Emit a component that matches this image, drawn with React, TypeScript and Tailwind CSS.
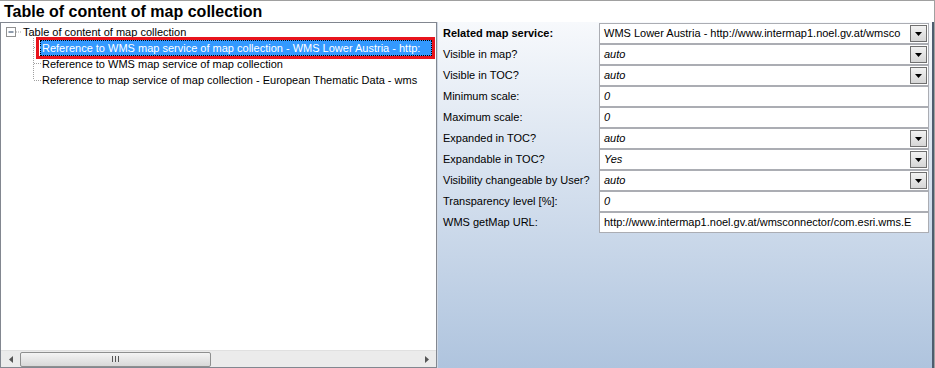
import React from "react";

const rows: { label: string; value: string; combo?: boolean; italic?: boolean; bold?: boolean }[] = [
  { label: "Related map service:", value: "WMS Lower Austria - http://www.intermap1.noel.gv.at/wmsco", combo: true, bold: true },
  { label: "Visible in map?", value: "auto", combo: true, italic: true },
  { label: "Visible in TOC?", value: "auto", combo: true, italic: true },
  { label: "Minimum scale:", value: "0", italic: true },
  { label: "Maximum scale:", value: "0", italic: true },
  { label: "Expanded in TOC?", value: "auto", combo: true, italic: true },
  { label: "Expandable in TOC?", value: "Yes", combo: true, italic: true },
  { label: "Visibility changeable by User?", value: "auto", combo: true, italic: true },
  { label: "Transparency level [%]:", value: "0", italic: true },
  { label: "WMS getMap URL:", value: "http://www.intermap1.noel.gv.at/wmsconnector/com.esri.wms.E" },
];

const DropButton = () => (
  <div className="w-[17px] h-[17px] mr-[1px] border border-[#707070] bg-gradient-to-b from-[#f2f2f2] to-[#d6d6d6] flex items-center justify-center">
    <svg width="7" height="4" viewBox="0 0 7 4">
      <path d="M0 0h7L3.5 4z" fill="#000" />
    </svg>
  </div>
);

const App = () => {
  return (
    <div className="w-[935px] h-[368px] flex flex-col bg-white border-t border-r border-[#a0a0a0] overflow-hidden font-['Liberation_Sans',Arial,sans-serif] text-[11px] text-black">
      <div className="h-[21px] pl-[4px] flex items-center text-[16px] font-bold leading-none">
        Table of content of map collection
      </div>
      <div className="flex flex-1 min-h-0">
        {/* tree */}
        <div className="w-[437px] border border-[#828790] flex flex-col">
          <div className="relative flex-1 pt-[1px]">
            <svg className="absolute left-0 top-0" width="60" height="90">
              <rect x="5.5" y="4.5" width="9" height="9" fill="#fff" stroke="#919191" />
              <path d="M7.5 9h5" stroke="#1e395b" />
              <path d="M15 9h5" stroke="#a0a0a0" strokeDasharray="1 1" />
              <path d="M32.5 15v42M33 24.5h7M33 40.5h7M33 57.5h7" stroke="#a0a0a0" strokeDasharray="1 1" />
            </svg>
            <div className="h-[16px] pl-[22px] flex items-center">Table of content of map collection</div>
            <div className="h-[16px] pl-[39px] flex items-center">
              <span className="bg-[#3399ff] text-white px-[2px] h-[16px] flex items-center w-[392px] outline-1 outline-dotted outline-[#000] -outline-offset-1">
                Reference to WMS map service of map collection - WMS Lower Austria - http:
              </span>
            </div>
            <div className="h-[16px] pl-[41px] flex items-center">Reference to WMS map service of map collection</div>
            <div className="h-[16px] pl-[41px] flex items-center">Reference to map service of map collection - European Thematic Data - wms</div>
            <div className="absolute left-[35px] top-[14px] w-[399px] h-[22px] border-[3px] border-[#e8141c]" />
          </div>
          <div className="h-[17px] bg-[#ebebeb] border-t border-[#e0e0e0] flex items-center">
            <div className="w-[19px] flex items-center justify-center">
              <svg width="4" height="7" viewBox="0 0 4 7"><path d="M4 0v7L0 3.5z" fill="#555" /></svg>
            </div>
            <div className="w-[191px] h-[15px] border border-[#8e8f8f] rounded-[2px] bg-gradient-to-b from-[#f4f4f4] to-[#d8d8d8] flex items-center justify-center">
              <svg width="7" height="6" viewBox="0 0 7 6"><path d="M0.5 0v6M3.5 0v6M6.5 0v6" stroke="#555" /></svg>
            </div>
            <div className="flex-1" />
            <div className="w-[19px] flex items-center justify-center">
              <svg width="4" height="7" viewBox="0 0 4 7"><path d="M0 0v7L4 3.5z" fill="#555" /></svg>
            </div>
          </div>
        </div>
        {/* properties */}
        <div className="flex-1 bg-gradient-to-b from-[#f7f9fc] to-[#afc4de] border-l border-[#d0d8e4] border-r-2 border-r-[#4e5d6e] pt-[1px] pl-[5px] pr-[3px]">
          {rows.map((r) => (
            <div key={r.label} className="h-[21px] flex items-center">
              <div className={`w-[156px] ${r.bold ? "font-bold" : ""}`}>{r.label}</div>
              <div className="flex-1 h-[21px] bg-white border border-[#abadb3] flex items-center pl-[4px]">
                <span className={`flex-1 ${r.italic ? "italic" : ""}`}>{r.value}</span>
                {r.combo && <DropButton />}
              </div>
            </div>
          ))}
        </div>
      </div>
    </div>
  );
};

export default App;
